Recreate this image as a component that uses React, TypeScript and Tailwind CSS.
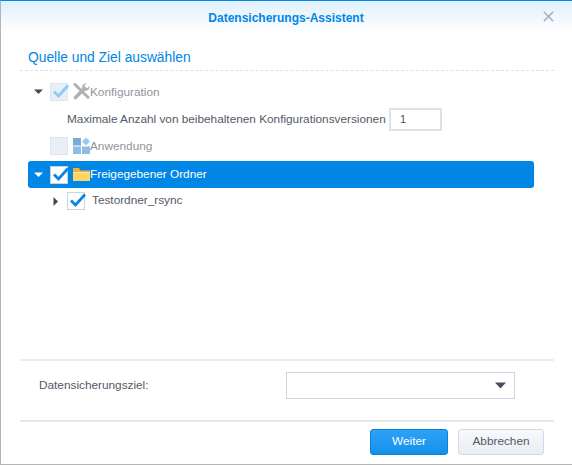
import { X } from "lucide-react";

function Caret({ dir, color }: { dir: "down" | "right"; color: string }) {
  return (
    <svg width="9" height="9" viewBox="0 0 9 9" className="shrink-0">
      <path d={dir === "down" ? "M0 2.5h9L4.5 7z" : "M2.5 0v9L7 4.5z"} fill={color} />
    </svg>
  );
}

function Check({ state }: { state: "faded" | "empty" | "white" | "normal" }) {
  const box =
    state === "white" || state === "normal"
      ? "bg-white border-[#c5d3e2]"
      : "bg-[#e9eff6] border-[#dde5ee]";
  return (
    <div className={`relative w-[18px] h-[18px] shrink-0 border ${box}`}>
      {state !== "empty" && (
        <svg width="20" height="18" viewBox="0 0 20 18" className="absolute left-[-0.5px] top-[-2px]">
          <path
            d="M3 9.5l4.5 4.5L17 3.5"
            fill="none"
            stroke={state === "faded" ? "#92c8f1" : "#0a86e0"}
            strokeWidth="2.8"
          />
        </svg>
      )}
    </div>
  );
}

function WrenchIcon() {
  return (
    <svg width="17" height="17" viewBox="0 0 17 17" className="shrink-0">
      <path d="M2 1.500l13 12.800" stroke="#aeb2b7" strokeWidth="3" strokeLinecap="round" fill="none" />
      <path d="M2.500 14.500l9-9" stroke="#aeb2b7" strokeWidth="3.600" strokeLinecap="round" fill="none" />
      <path d="M13.800.6c-2.600-.6-5 1.400-4.700 4.200l3 3c2.800.3 5-2.200 4.200-4.800L14 5.300l-2.200-.6-.5-2z" fill="#aeb2b7" />
    </svg>
  );
}

function AppIcon() {
  return (
    <svg width="17" height="17" viewBox="0 0 17 17" className="shrink-0">
      <rect x="0" y="1" width="8" height="7.500" fill="#7aa9da" />
      <rect x="0" y="9.500" width="8" height="7.500" fill="#90bbe5" />
      <rect x="9" y="9.500" width="8" height="7.500" fill="#90bbe5" />
      <path d="M13 .5l4 4-4 4-4-4z" fill="#93c9f2" />
    </svg>
  );
}

function FolderIcon() {
  return (
    <svg width="17" height="15" viewBox="0 0 17 15" className="shrink-0">
      <path d="M0 1h6l1.500 2.500H17v3H0z" fill="#eeb23c" />
      <rect x="0" y="5" width="17" height="9" fill="#fcd468" />
      <rect x="0" y="5" width="17" height="1" fill="#fee59a" />
    </svg>
  );
}

export default function App() {
  return (
    <div className="w-[572px] h-[465px] flex flex-col bg-white border-l border-l-[#b4b4b4] border-t border-t-[#0086e5] border-b border-b-[#b4b4b4] font-['Liberation_Sans',Arial,sans-serif] text-[11.8px] text-[#525a66] overflow-hidden">
      {/* Header */}
      <div className="relative h-[32px] shrink-0 flex items-center justify-center bg-gradient-to-b from-[#dff0fd] to-white">
        <span className="font-bold text-xs text-[#0086e5] pt-[1px] pr-[1px]">Datensicherungs-Assistent</span>
        <X className="absolute right-[15px] top-[7px] w-[17px] h-[17px] text-[#a4abb3]" strokeWidth={2} />
      </div>

      <div className="flex-1 flex flex-col pl-[19px] pr-[18px]">
        {/* Section title */}
        <div className="mt-[13px] h-[25px] border-b border-dashed border-[#d8e2ec] pl-[8px] pt-[1px]">
          <span className="block text-[13.8px] leading-[22px] text-[#0086e5]">Quelle und Ziel auswählen</span>
        </div>

        {/* Tree */}
        <div className="mt-[7px] pl-[8px] pr-[20px] flex-1 flex flex-col">
          <div className="h-[27px] flex items-center text-[#8f959c]">
            <div className="w-[22px] pl-[6px] flex"><Caret dir="down" color="#414b55" /></div>
            <Check state="faded" />
            <div className="ml-[5px]"><WrenchIcon /></div>
            <span className="pt-[2px]">Konfiguration</span>
          </div>
          <div className="h-[27px] flex items-center pl-[39px]">
            <span className="pt-[2px]">Maximale Anzahl von beibehaltenen Konfigurationsversionen</span>
            <div className="ml-[3px] w-[53px] h-[23px] mt-[1px] border-2 border-[#dbe2ea] pl-[9px] flex items-center pt-[1px]">1</div>
          </div>
          <div className="h-[27px] flex items-center text-[#8f959c]">
            <div className="w-[22px]" />
            <Check state="empty" />
            <div className="ml-[5px]"><AppIcon /></div>
            <span className="pt-[2px]">Anwendung</span>
          </div>
          <div className="h-[27px] mt-[2px] flex items-center bg-[#0086e5] rounded-[3px] text-white">
            <div className="w-[22px] pl-[6px] flex"><Caret dir="down" color="#ffffff" /></div>
            <Check state="white" />
            <div className="ml-[5px]"><FolderIcon /></div>
            <span>Freigegebener Ordner</span>
          </div>
          <div className="h-[26px] flex items-center pl-[23px]">
            <Caret dir="right" color="#414b55" />
            <div className="ml-[7px]"><Check state="normal" /></div>
            <span className="ml-[7px]">Testordner_rsync</span>
          </div>
        </div>

        {/* Destination */}
        <div className="h-[61px] border-t-2 border-[#e8edf5] flex items-start pt-[11px] pl-[19px]">
          <span className="w-[247px] leading-[26px]">Datensicherungsziel:</span>
          <div className="w-[229px] h-[27px] border border-[#c9d5e3] flex items-center justify-end pr-[8px]">
            <svg width="11" height="7" viewBox="0 0 11 7"><path d="M0 .5h11L5.500 6.500z" fill="#454e5a" /></svg>
          </div>
        </div>

        {/* Buttons */}
        <div className="h-[44px] border-t-2 border-[#e6e8ea] flex items-start justify-end gap-[10px] pt-[7px] pr-[10px]">
          <button className="w-[78px] h-[26px] rounded-[3px] border border-[#0a80d8] bg-gradient-to-b from-[#2ca2f5] to-[#1390ec] text-white">Weiter</button>
          <button className="w-[86px] h-[26px] rounded-[3px] border border-[#cfdae6] bg-gradient-to-b from-[#f7f9fb] to-[#e9eef4]">Abbrechen</button>
        </div>
      </div>
    </div>
  );
}
